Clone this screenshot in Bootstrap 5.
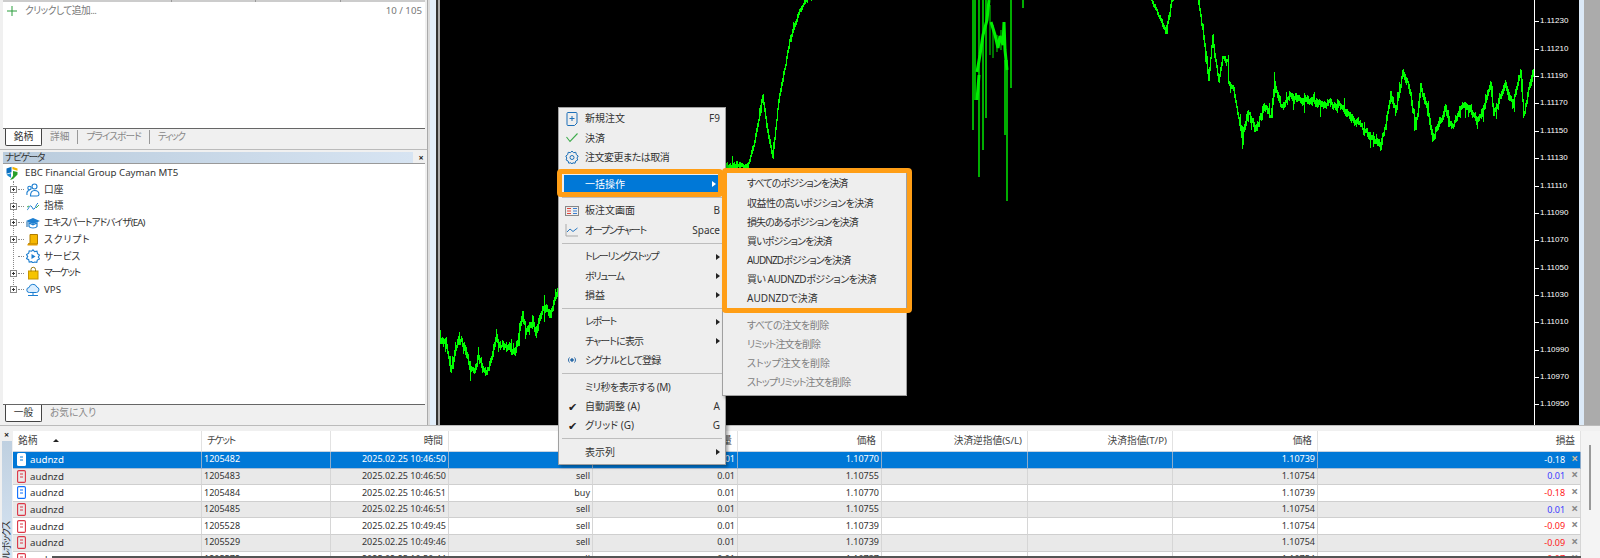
<!DOCTYPE html>
<html lang="ja">
<head>
<meta charset="utf-8">
<title>MT5</title>
<link href="https://cdn.jsdelivr.net/npm/bootstrap@5.3.0/dist/css/bootstrap.min.css" rel="stylesheet">
<style>
html,body{height:558px;overflow:hidden}
body{position:relative;background:#f0f0f0;color:#333;font-family:"Noto Sans","Noto Sans CJK JP",sans-serif;font-size:9.7px;line-height:1.2;font-feature-settings:"palt"}
.t1{letter-spacing:-.5px}
.t2{letter-spacing:-.9px}
.t3{letter-spacing:-1.3px}
.t4{letter-spacing:1px}
.top-zone{height:425px}
.side{width:427px;flex:none}
.watch{height:129px;margin:0 2px 0 3px;background:#fff;border-top:2px solid #ccc}
.hdr-ticks{height:0;position:relative}
.hdr-ticks i{position:absolute;top:-2px;width:1px;height:2px;background:#999}
.watch-add{height:17px;padding:1px 3px 0 3px;color:#777}
.plus-sign{width:10px;height:10px;margin:0 8px 0 1px;flex:none}
.tabbar{height:19px;margin:0 2px 0 3px;border-top:1px solid #666;padding-left:2px;color:#888}
.tab-on{width:37px;height:17px;background:#fff;border:1px solid #444;border-top:0;border-radius:0 0 2px 2px;color:#333;text-align:center;line-height:15px}
.tab-off{padding:0 8px;height:14px;line-height:14px;margin-top:1px;border-right:1px solid #999}
.tab-off:last-child{border-right:0}
.rule-gap{height:3px;border-bottom:1px solid #bbb;margin-bottom:2px}
.nav-title{height:11px;margin:0 2px 0 3px;line-height:11px;padding-left:2px;color:#333}
.nav-grad{background:linear-gradient(90deg,#b9cbdc,#d7e4f2)}
.x-mark{width:12px;text-align:center;font-weight:700;font-size:9px;color:#222;line-height:11px}
.tree-box{height:244px;margin:0 2px 0 3px;background:#fff;border-top:1px solid #999;position:relative;padding-top:1px}
.tree-line{position:absolute;left:10px;top:17px;height:110px;border-left:1px dotted #888}
.tree-row{height:16.7px;padding-left:5px;position:relative}
.tree-row.root{padding-left:2px}
.expander{width:7px;height:7px;border:1px solid #888;background:#fff;position:relative;margin-right:1px;flex:none;z-index:1;margin-left:2px}
.expander::before{content:"";position:absolute;left:1px;top:2px;width:3px;height:1px;background:#333}
.expander::after{content:"";position:absolute;left:2px;top:1px;width:1px;height:3px;background:#333}
.no-exp{width:10px;flex:none}
.dash{width:6px;border-top:1px dotted #888;flex:none;margin-right:2px}
.tree-ico{width:14px;height:14px;flex:none;margin-right:4px}
.root .tree-ico{margin-right:6px}
.split{width:13px;flex:none;background:linear-gradient(90deg,#aaa 0 1px,#ddd 1px 3px,#e2eefa 3px 9px,#333 9px 11px,#aaa 11px 13px)}
.chart-wrap{width:1139px;flex:none;background:#000;overflow:hidden;height:425px}
.chart-svg{width:1094px;height:425px;flex:none;display:block}
.axis{width:45px;flex:none;border-left:1px solid #fff;padding-top:15.4px;color:#fff;font-family:"Liberation Sans",sans-serif;font-size:8px;height:425px;overflow:hidden}
.axis-row{height:27.36px;position:relative}
.axis-row>span{display:block;line-height:12px;padding-left:5px}
.axis-row::before{content:"";position:absolute;left:0;top:6px;width:4px;height:1px;background:#fff}
.gut-a{width:5px;flex:none;background:#dbe9f7}
.gut-b{flex:1;background:#ababab}
.bottom-zone{height:133px;border-top:1px solid #bbb}
.strip{width:13px;flex:none;overflow:hidden}
.strip-x{height:11px;text-align:center;font-weight:700;font-size:9px;line-height:11px;color:#222;margin-top:3px}
.strip-bar{flex:1;margin:1px 1px 0 2px;background:linear-gradient(180deg,#bfd0e0,#d7e4f2);position:relative;overflow:hidden}
.strip-text{position:absolute;left:0;top:81px;writing-mode:vertical-rl;transform:rotate(180deg);text-orientation:sideways;white-space:nowrap;line-height:10px;color:#333;font-size:9.7px;letter-spacing:-1.2px}
.grid-wrap{width:1568px;flex:none;overflow:hidden;background:#fff;margin-top:5px;position:relative}
.pos-table{table-layout:fixed;width:1568px;margin:0;font-size:9px;color:#333;--bs-table-bg:transparent;border-collapse:separate;border-spacing:0}
.pos-table th{height:21px;font-weight:400;padding:0 5px;border:0;border-right:1px solid #e2e2e2;border-bottom:1px solid #c9d3e0;font-size:9.7px;color:#444;vertical-align:middle;background:#fff}
.pos-table td{height:16.6px;padding:0 2px 0 2px;border:0;border-right:1px solid #d6d6d6;border-bottom:1px solid #cfcfcf;vertical-align:middle;white-space:nowrap;background:#fff;color:#333}
.pos-table tr.alt td{background:#e9e9e9}
.pos-table tr.sel td{background:#0078d7;color:#fff;border-right-color:#8eaccb;border-bottom-color:#a9bdd6}
.pos-table td:first-child{padding-left:4px}
.sym-cell{font-size:9.7px}
.doc-ico{width:9px;height:13px;margin-right:4px;vertical-align:-3px}
.gain{color:#3a3aff}
.loss{color:#ff2020}
.x-close{color:#888;font-weight:700;margin-left:6px;margin-right:0;font-size:12px;line-height:10px}
.sel .x-close{color:#c9bca0}
.sort-tri{display:inline-block;margin-left:16px;border:3px solid transparent;border-top:0;border-bottom:3px solid #222;vertical-align:2px}
.bottom-line{position:absolute;left:39px;right:0;bottom:0;height:2px;background:#555}
.sbar{flex:1;margin-top:5px;background:#f4f4f4;position:relative}
.sbar-thumb{width:2px;height:65px;background:#999;margin:14px 0 0 8px}
.mt-menu.dropdown-menu{position:absolute;display:block;margin:0;padding:1.4px 0 2.4px;border:1px solid #a0a0a0;border-radius:0;background:#eee;font-size:10px;color:#333;min-width:0;box-shadow:2px 2px 3px rgba(0,0,0,.35)}
.menu-main{left:558px;top:107px;width:168px;z-index:4}
.menu-sub{left:722px;top:172px;width:185px;z-index:5}
.mt-menu .dropdown-item{height:19.15px;padding:0 5px 0 0;color:#333;font-size:10px;line-height:19px}
.mt-menu .dropdown-item.is-hot{background:#0078d7;color:#fff;margin-left:5px;width:157px;padding-right:5px}
.is-hot .m-ico{width:21px}
.mt-menu .dropdown-item.is-off{color:#808080}
.menu-sub .dropdown-item{padding-left:24px}
.mt-menu .dropdown-divider{margin:3.35px 3px;border-top:1px solid #bdbdbd;opacity:1;height:0}
.m-ico{width:26px;flex:none;display:flex;justify-content:center}
.m-ico svg{width:14px;height:14px}
.sub-tri{width:0;height:0;border:3.5px solid transparent;border-left:4px solid #222;border-right:0;flex:none}
.is-hot .sub-tri{border-left-color:#fff}
.tick-mark{font-size:11px;color:#222;line-height:1}
.callout{position:absolute;border:5.5px solid #ff9e16;border-radius:4px;z-index:6;pointer-events:none}
.call-a{left:557px;top:169px;width:166px;height:28px}
.call-b{left:722px;top:168px;width:190px;height:145px}
</style>
</head>
<body>
<svg class="d-none" xmlns="http://www.w3.org/2000/svg">
  <symbol id="doc" viewBox="0 0 9 13"><rect x=".6" y=".6" width="7.8" height="11.8" rx="1.2" fill="none" stroke="currentColor" stroke-width="1.1"/><path d="M3 4h3M3 7h3" stroke="currentColor" stroke-width="1"/></symbol>
</svg>

<div class="top-zone d-flex">
  <div class="side d-flex flex-column">
    <div class="watch">
      <div class="hdr-ticks"><i style="left:168px"></i><i style="left:252px"></i><i style="left:337px"></i></div>
      <div class="watch-add d-flex align-items-center"><svg class="plus-sign" viewBox="0 0 10 10"><path d="M5 0v10M0 5h10" stroke="#2a9d3c" fill="none"/></svg><span class="flex-grow-1 t1">クリックして追加...</span><span>10 / 105</span></div>
    </div>
    <div class="tabbar d-flex"><div class="tab-on">銘柄</div><div class="tab-off">詳細</div><div class="tab-off t2">プライスボード</div><div class="tab-off t3">ティック</div></div>
    <div class="rule-gap"></div>
    <div class="d-flex"><div class="nav-title nav-grad flex-grow-1"><span class="t3">ナビゲータ</span></div><div class="x-mark">×</div></div>
    <div class="tree-box">
      <div class="tree-line"></div>
      <div class="tree-row root d-flex align-items-center">
        <svg class="tree-ico" viewBox="0 0 14 14"><path d="M1.500 2.500 6.500.8v5.400L1.500 7.800z" fill="#0b6fbf"/><path d="M7.500.8 12.500 2.500v2.200L7.500 3.200z" fill="#f0b400"/><path d="M8 5l4.500 1v2.500L8 13l-3 1 3-4z" fill="#2aa02a"/><path d="M1.500 8.500l4.500-1.200v4.500L3 10z" fill="#1b8ad0"/></svg>
        <span>EBC Financial Group Cayman MT5</span>
      </div>
      <div class="tree-row d-flex align-items-center"><span class="expander"></span><span class="dash"></span>
        <svg class="tree-ico" viewBox="0 0 14 14" fill="none" stroke="#1c7ed0" stroke-width="1.100"><circle cx="8.500" cy="3.500" r="2.500"/><path d="M4.500 13c0-4 1-5.500 4-5.500s4.500 1.500 4.500 4c0 1-1 1.500-2 1.500z"/><circle cx="3.500" cy="5" r="1.700"/><path d="M1 12c-.5-3 .5-4.500 2.500-4.500"/></svg><span>口座</span></div>
      <div class="tree-row d-flex align-items-center"><span class="expander"></span><span class="dash"></span>
        <svg class="tree-ico" viewBox="0 0 14 14" fill="none" stroke-width="1"><path d="M1 11c2-1 2-5 4-4s1 4 3 3 2-5 4-6" stroke="#1c7ed0"/><path d="M1 8l2-1M10 9l3-3" stroke="#45b050"/></svg><span>指標</span></div>
      <div class="tree-row d-flex align-items-center"><span class="expander"></span><span class="dash"></span>
        <svg class="tree-ico" viewBox="0 0 14 14"><path d="M0 5l7-3 7 3-7 3z" fill="#1c7ed0"/><path d="M3 7v3.500c1 2 7 2 8 0V7l-4 1.800z" fill="none" stroke="#1c7ed0" stroke-width="1.200"/><path d="M1 5.500V11" stroke="#0c5ca0" stroke-width="1"/></svg><span class="t2">エキスパートアドバイザ(EA)</span></div>
      <div class="tree-row d-flex align-items-center"><span class="expander"></span><span class="dash"></span>
        <svg class="tree-ico" viewBox="0 0 14 14"><path d="M4 1.500h7.500V11H2c1.500 0 2-1 2-2z" fill="#f6b800" stroke="#b07c00"/><path d="M1.500 11h10v1.500h-10z" fill="#e09a00"/></svg><span class="t4">スクリプト</span></div>
      <div class="tree-row d-flex align-items-center"><span class="no-exp"></span><span class="dash"></span>
        <svg class="tree-ico" viewBox="0 0 14 14"><path d="M7 .8l1.600 1.800 2.400-.4.500 2.400 2 1.400-1.200 2 1.200 2-2.200 1.100-.5 2.300-2.400-.4L7 14l-1.400-1.400-2.400.4-.5-2.300L.5 9.600l1.200-2-1.200-2 2.200-1.400.5-2.400 2.400.4z" fill="none" stroke="#1c7ed0" stroke-width="1.100"/><path d="M5.500 5l4 2.500-4 2.500z" fill="#1c7ed0"/></svg><span>サービス</span></div>
      <div class="tree-row d-flex align-items-center"><span class="expander"></span><span class="dash"></span>
        <svg class="tree-ico" viewBox="0 0 14 14"><rect x="2.500" y="5" width="9.500" height="8" fill="#f6c400" stroke="#c79400"/><path d="M5 5.500V3.500a2.200 2.200 0 0 1 4.500 0v2" fill="none" stroke="#9a7a10" stroke-width="1"/></svg><span class="t3">マーケット</span></div>
      <div class="tree-row d-flex align-items-center"><span class="expander"></span><span class="dash"></span>
        <svg class="tree-ico" viewBox="0 0 14 14" fill="none" stroke="#1c7ed0"><path d="M3.500 9.500a2.500 2.500 0 0 1-.4-5A4 4 0 0 1 10.800 4a2.800 2.800 0 0 1-.3 5.500z" fill="#dbeeff"/><path d="M7 9.500V12M2 12.500h10"/></svg><span>VPS</span></div>
    </div>
    <div class="tabbar d-flex mt-auto"><div class="tab-on">一般</div><div class="tab-off">お気に入り</div></div>
    <div style="height:2px"></div>
  </div>
  <div class="split"></div>
  <div class="chart-wrap d-flex">
    <svg class="chart-svg" viewBox="440 0 1094 425" xmlns="http://www.w3.org/2000/svg">
      <path id="priceTrace" fill="none" stroke="#00ff00" stroke-width="1" shape-rendering="crispEdges"/>
      <path fill="none" stroke="#00e600" stroke-width="1.500" d="M973 0V130M979 0V177M983 0V150M986 0V118M1007 60V201M1005 60V135M1011 0V88M1023 0V8M975 0V100"/>
      <path fill="none" stroke="#00f000" stroke-width="3" d="M977 72 980 55 983 35 987 20 989 0M977 100 979 75M991 22 995 35 998 48 1000 36 1003 45 1004 22 1005 50 1007 70"/>
      <path fill="none" stroke="#00e600" stroke-width="1" d="M990 5V55M993 25V58M997 35V52M1001 30V50"/>
    </svg>
    <div class="axis">
      <div class="axis-row"><span>1.11230</span></div><div class="axis-row"><span>1.11210</span></div><div class="axis-row"><span>1.11190</span></div><div class="axis-row"><span>1.11170</span></div><div class="axis-row"><span>1.11150</span></div><div class="axis-row"><span>1.11130</span></div><div class="axis-row"><span>1.11110</span></div><div class="axis-row"><span>1.11090</span></div><div class="axis-row"><span>1.11070</span></div><div class="axis-row"><span>1.11050</span></div><div class="axis-row"><span>1.11030</span></div><div class="axis-row"><span>1.11010</span></div><div class="axis-row"><span>1.10990</span></div><div class="axis-row"><span>1.10970</span></div><div class="axis-row"><span>1.10950</span></div>
    </div>
  </div>
  <div class="gut-a"></div><div class="gut-b"></div>
</div>

<div class="bottom-zone d-flex">
  <div class="strip d-flex flex-column">
    <div class="strip-x">×</div>
    <div class="strip-bar"><span class="strip-text">ツールボックス</span></div>
  </div>
  <div class="grid-wrap">
    <table class="table pos-table">
      <colgroup><col style="width:189px"><col style="width:129px"><col style="width:118px"><col style="width:144px"><col style="width:145px"><col style="width:144px"><col style="width:146px"><col style="width:145px"><col style="width:145px"><col style="width:263px"></colgroup>
      <thead><tr><th>銘柄<span class="sort-tri"></span></th><th><span class="t3">チケット</span></th><th class="text-end">時間</th><th class="text-end">タイプ</th><th class="text-end">取引量</th><th class="text-end">価格</th><th class="text-end">決済逆指値(S/L)</th><th class="text-end">決済指値(T/P)</th><th class="text-end">価格</th><th class="text-end">損益</th></tr></thead>
      <tbody>
        <tr class="sel"><td class="sym-cell"><svg class="doc-ico" viewBox="0 0 9 13"><rect width="9" height="13" rx="1.500" fill="#fff"/><path d="M3 4h3M3 7h3" stroke="#0078d7"/></svg>audnzd</td><td>1205482</td><td class="text-end">2025.02.25 10:46:50</td><td class="text-end">buy</td><td class="text-end">0.01</td><td class="text-end">1.10770</td><td></td><td></td><td class="text-end">1.10739</td><td class="text-end">-0.18<span class="x-close">×</span></td></tr>
        <tr class="alt"><td class="sym-cell"><svg class="doc-ico text-danger"><use href="#doc"/></svg>audnzd</td><td>1205483</td><td class="text-end">2025.02.25 10:46:50</td><td class="text-end">sell</td><td class="text-end">0.01</td><td class="text-end">1.10755</td><td></td><td></td><td class="text-end">1.10754</td><td class="text-end"><span class="gain">0.01</span><span class="x-close">×</span></td></tr>
        <tr><td class="sym-cell"><svg class="doc-ico text-primary"><use href="#doc"/></svg>audnzd</td><td>1205484</td><td class="text-end">2025.02.25 10:46:51</td><td class="text-end">buy</td><td class="text-end">0.01</td><td class="text-end">1.10770</td><td></td><td></td><td class="text-end">1.10739</td><td class="text-end"><span class="loss">-0.18</span><span class="x-close">×</span></td></tr>
        <tr class="alt"><td class="sym-cell"><svg class="doc-ico text-danger"><use href="#doc"/></svg>audnzd</td><td>1205485</td><td class="text-end">2025.02.25 10:46:51</td><td class="text-end">sell</td><td class="text-end">0.01</td><td class="text-end">1.10755</td><td></td><td></td><td class="text-end">1.10754</td><td class="text-end"><span class="gain">0.01</span><span class="x-close">×</span></td></tr>
        <tr><td class="sym-cell"><svg class="doc-ico text-danger"><use href="#doc"/></svg>audnzd</td><td>1205528</td><td class="text-end">2025.02.25 10:49:45</td><td class="text-end">sell</td><td class="text-end">0.01</td><td class="text-end">1.10739</td><td></td><td></td><td class="text-end">1.10754</td><td class="text-end"><span class="loss">-0.09</span><span class="x-close">×</span></td></tr>
        <tr class="alt"><td class="sym-cell"><svg class="doc-ico text-danger"><use href="#doc"/></svg>audnzd</td><td>1205529</td><td class="text-end">2025.02.25 10:49:46</td><td class="text-end">sell</td><td class="text-end">0.01</td><td class="text-end">1.10739</td><td></td><td></td><td class="text-end">1.10754</td><td class="text-end"><span class="loss">-0.09</span><span class="x-close">×</span></td></tr>
        <tr><td class="sym-cell"><svg class="doc-ico text-danger"><use href="#doc"/></svg>audnzd</td><td>1205572</td><td class="text-end">2025.02.25 10:50:44</td><td class="text-end">sell</td><td class="text-end">0.01</td><td class="text-end">1.10737</td><td></td><td></td><td class="text-end">1.10754</td><td class="text-end"><span class="loss">-0.07</span><span class="x-close">×</span></td></tr>
      </tbody>
    </table>
    <div class="bottom-line"></div>
  </div>
  <div class="sbar"><div class="sbar-thumb"></div></div>
</div>

<ul class="dropdown-menu mt-menu menu-main list-unstyled">
  <li><a class="dropdown-item d-flex align-items-center"><span class="m-ico"><svg viewBox="0 0 14 14" fill="none" stroke="#1c6fb8"><path d="M3 .5h8a1 1 0 0 1 1 1V11l-2.500 2.500H3a1 1 0 0 1-1-1V1.500a1 1 0 0 1 1-1z"/><path d="M7 4v5M4.500 6.500h5"/></svg></span><span class="flex-grow-1">新規注文</span><span>F9</span></a></li>
  <li><a class="dropdown-item d-flex align-items-center"><span class="m-ico"><svg viewBox="0 0 14 14" fill="none" stroke="#3cab4a" stroke-width="1.100"><path d="M1.500 6l3.500 4.500 7.500-8"/></svg></span><span class="flex-grow-1">決済</span></a></li>
  <li><a class="dropdown-item d-flex align-items-center"><span class="m-ico"><svg viewBox="0 0 14 14" fill="none" stroke="#1c6fb8" stroke-width="1"><path d="M7 1l1.500 1.700 2.300-.4.500 2.300 1.900 1.400L12 8l.7 2-2 1-.6 2.200-2.300-.4L7 14l-1-1.200-2.300.4-.6-2.200-2-1L1.800 8 .8 6l1.900-1.400.5-2.300 2.300.4z"/><circle cx="7" cy="7.500" r="2"/></svg></span><span class="flex-grow-1 t1">注文変更または取消</span></a></li>
  <li><hr class="dropdown-divider"></li>
  <li><a class="dropdown-item is-hot d-flex align-items-center"><span class="m-ico"></span><span class="flex-grow-1">一括操作</span><span class="sub-tri"></span></a></li>
  <li><hr class="dropdown-divider"></li>
  <li><a class="dropdown-item d-flex align-items-center"><span class="m-ico"><svg viewBox="0 0 14 14" fill="none"><rect x=".5" y="2.500" width="13" height="9" stroke="#888"/><path d="M2 4.500h4M2 7h4M2 9.500h4" stroke="#e0443a" stroke-width="1.200"/><path d="M8 4.500h4M8 7h4M8 9.500h4" stroke="#3b7fd0" stroke-width="1.200"/></svg></span><span class="flex-grow-1">板注文画面</span><span>B</span></a></li>
  <li><a class="dropdown-item d-flex align-items-center"><span class="m-ico"><svg viewBox="0 0 14 14" fill="none"><path d="M1 1v12h12" stroke="#aaa"/><path d="M2 9l3-3 3 2.500L12.500 5" stroke="#2a79c2"/></svg></span><span class="flex-grow-1 t3">オープンチャート</span><span>Space</span></a></li>
  <li><hr class="dropdown-divider"></li>
  <li><a class="dropdown-item d-flex align-items-center"><span class="m-ico"></span><span class="flex-grow-1 t3">トレーリングストップ</span><span class="sub-tri"></span></a></li>
  <li><a class="dropdown-item d-flex align-items-center"><span class="m-ico"></span><span class="flex-grow-1 t3">ボリューム</span><span class="sub-tri"></span></a></li>
  <li><a class="dropdown-item d-flex align-items-center"><span class="m-ico"></span><span class="flex-grow-1">損益</span><span class="sub-tri"></span></a></li>
  <li><hr class="dropdown-divider"></li>
  <li><a class="dropdown-item d-flex align-items-center"><span class="m-ico"></span><span class="flex-grow-1 t3">レポート</span><span class="sub-tri"></span></a></li>
  <li><a class="dropdown-item d-flex align-items-center"><span class="m-ico"></span><span class="flex-grow-1 t2">チャートに表示</span><span class="sub-tri"></span></a></li>
  <li><a class="dropdown-item d-flex align-items-center"><span class="m-ico"><svg viewBox="0 0 14 14" fill="none" stroke="#2a6aa8"><circle cx="7" cy="7" r="1.300" fill="#2a6aa8"/><path d="M4.500 4.500c-1.300 1.300-1.300 3.700 0 5M9.500 4.500c1.300 1.300 1.300 3.700 0 5"/></svg></span><span class="flex-grow-1 t2">シグナルとして登録</span></a></li>
  <li><hr class="dropdown-divider"></li>
  <li><a class="dropdown-item d-flex align-items-center"><span class="m-ico"></span><span class="flex-grow-1 t1">ミリ秒を表示する (M)</span></a></li>
  <li><a class="dropdown-item d-flex align-items-center"><span class="m-ico"><span class="tick-mark">✔</span></span><span class="flex-grow-1">自動調整 (A)</span><span>A</span></a></li>
  <li><a class="dropdown-item d-flex align-items-center"><span class="m-ico"><span class="tick-mark">✔</span></span><span class="flex-grow-1">グリッド (G)</span><span>G</span></a></li>
  <li><hr class="dropdown-divider"></li>
  <li><a class="dropdown-item d-flex align-items-center"><span class="m-ico"></span><span class="flex-grow-1">表示列</span><span class="sub-tri"></span></a></li>
</ul>

<ul class="dropdown-menu mt-menu menu-sub list-unstyled">
  <li><a class="dropdown-item t2">すべてのポジションを決済</a></li>
  <li><a class="dropdown-item t1">収益性の高いポジションを決済</a></li>
  <li><a class="dropdown-item t2">損失のあるポジションを決済</a></li>
  <li><a class="dropdown-item t2">買いポジションを決済</a></li>
  <li><a class="dropdown-item t2">AUDNZDポジションを決済</a></li>
  <li><a class="dropdown-item t1">買い AUDNZDポジションを決済</a></li>
  <li><a class="dropdown-item">AUDNZDで決済</a></li>
  <li><hr class="dropdown-divider"></li>
  <li><a class="dropdown-item is-off t1">すべての注文を削除</a></li>
  <li><a class="dropdown-item is-off t2">リミット注文を削除</a></li>
  <li><a class="dropdown-item is-off">ストップ注文を削除</a></li>
  <li><a class="dropdown-item is-off t2">ストップリミット注文を削除</a></li>
</ul>

<div class="callout call-a"></div>
<div class="callout call-b"></div>

<script src="https://cdn.jsdelivr.net/npm/bootstrap@5.3.0/dist/js/bootstrap.bundle.min.js"></script>
<script>
(function(){
  var pts=[[440,343],[445,343],[450,366],[458,341],[462,345],[467,357],[472,374],[477,360],[486,376],[495,347],[502,343],[515,350],[522,318],[525,335],[532,333],[535,335],[543,307],[550,310],[558,290],[600,270],[660,230],[711,172],[727,167],[737,162],[747,165],[753,145],[762,95],[767,130],[772,155],[778,100],[790,35],[800,10],[812,-8],[820,-40],[1135,-40],[1150,-2],[1165,33],[1172,-4],[1180,-40],[1190,-40],[1197,-2],[1202,30],[1205,53],[1208,80],[1212,35],[1214,55],[1218,80],[1222,58],[1227,62],[1228,85],[1233,90],[1242,140],[1247,116],[1255,128],[1263,103],[1270,118],[1274,82],[1280,104],[1300,100],[1320,110],[1340,108],[1360,125],[1380,145],[1385,127],[1390,90],[1395,107],[1402,68],[1408,83],[1415,124],[1420,90],[1432,134],[1445,110],[1452,127],[1463,100],[1478,120],[1490,90],[1493,122],[1505,82],[1512,105],[1520,76],[1523,115],[1528,90],[1533,72]];
  var seed=20250225;
  function rnd(){seed=(seed*1664525+1013904223)%4294967296;return seed/4294967296;}
  var d="",k=0,prev=null,walk=0;
  for(var x=440;x<1534;x++){
    while(k<pts.length-2&&pts[k+1][0]<=x)k++;
    var a=pts[k],b=pts[k+1],t=(x-a[0])/(b[0]-a[0]),y=a[1]+(b[1]-a[1])*t;
    if(y<-14){prev=null;continue;}
    var thin=(x>1135&&x<1240)||(x>740&&x<820);
    var amp=thin?2.2:3.4;
    walk=walk*.8+(rnd()-.5)*(thin?2.5:6.5);
    var c=y+walk;
    var top=prev===null?c:Math.min(c,prev),bot=prev===null?c:Math.max(c,prev);
    var up=top-amp*(.3+rnd()*.9),dn=bot+amp*(.3+rnd()*.9);
    if(rnd()<.1)dn+=amp*(1+rnd()*2);
    if(rnd()<.08)up-=amp*(1+rnd()*1.5);
    d+="M"+(x+.5)+" "+up.toFixed(1)+"V"+dn.toFixed(1);
    prev=c;
  }
  document.getElementById("priceTrace").setAttribute("d",d);
})();
</script>
</body>
</html>
